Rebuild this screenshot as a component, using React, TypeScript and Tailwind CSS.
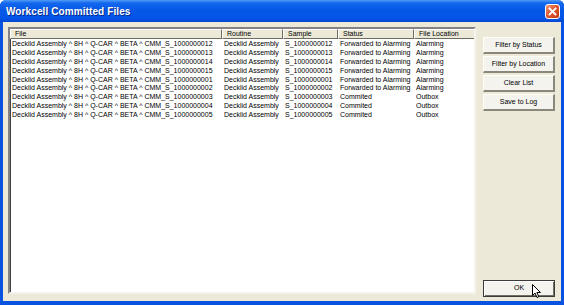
import React from "react";

const rows = [
  ["Decklid Assembly ^ 8H ^ Q-CAR ^ BETA ^ CMM_S_1000000012", "Decklid Assembly", "S_1000000012", "Forwarded to Alarming", "Alarming"],
  ["Decklid Assembly ^ 8H ^ Q-CAR ^ BETA ^ CMM_S_1000000013", "Decklid Assembly", "S_1000000013", "Forwarded to Alarming", "Alarming"],
  ["Decklid Assembly ^ 8H ^ Q-CAR ^ BETA ^ CMM_S_1000000014", "Decklid Assembly", "S_1000000014", "Forwarded to Alarming", "Alarming"],
  ["Decklid Assembly ^ 8H ^ Q-CAR ^ BETA ^ CMM_S_1000000015", "Decklid Assembly", "S_1000000015", "Forwarded to Alarming", "Alarming"],
  ["Decklid Assembly ^ 8H ^ Q-CAR ^ BETA ^ CMM_S_1000000001", "Decklid Assembly", "S_1000000001", "Forwarded to Alarming", "Alarming"],
  ["Decklid Assembly ^ 8H ^ Q-CAR ^ BETA ^ CMM_S_1000000002", "Decklid Assembly", "S_1000000002", "Forwarded to Alarming", "Alarming"],
  ["Decklid Assembly ^ 8H ^ Q-CAR ^ BETA ^ CMM_S_1000000003", "Decklid Assembly", "S_1000000003", "Commited", "Outbox"],
  ["Decklid Assembly ^ 8H ^ Q-CAR ^ BETA ^ CMM_S_1000000004", "Decklid Assembly", "S_1000000004", "Commited", "Outbox"],
  ["Decklid Assembly ^ 8H ^ Q-CAR ^ BETA ^ CMM_S_1000000005", "Decklid Assembly", "S_1000000005", "Commited", "Outbox"],
];

const cols = [
  { name: "File", w: "w-[212px]" },
  { name: "Routine", w: "w-[61px]" },
  { name: "Sample", w: "w-[55px]" },
  { name: "Status", w: "w-[76px]" },
  { name: "File Location", w: "w-[62px]" },
];

function Btn({ label, def }: { label: string; def?: boolean }) {
  return (
    <div
      className={
        "h-[17px] w-[72px] flex items-center justify-center bg-[#f4f3ee] text-[7px] text-black " +
        (def
          ? "border border-[#3b3b3b] shadow-[inset_1px_1px_0_#ffffff,inset_-1px_-1px_0_#716f64]"
          : "border-t border-l border-t-[#fffef5] border-l-[#fffef5] border-r-[2px] border-b-[2px] border-r-[#8a887c] border-b-[#8a887c]")
      }
    >
      {label}
    </div>
  );
}

export default function App() {
  return (
    <div
      className="w-[564px] h-[305px] flex flex-col bg-[#0a53e0] rounded-t-[6px] overflow-hidden"
      style={{ fontFamily: '"Liberation Sans", Arial, sans-serif' }}
    >
      <div className="h-[22px] shrink-0 flex items-center justify-between pl-[6px] pr-[4px] bg-[linear-gradient(to_bottom,#4f9cf7_0%,#1467ee_14%,#0558e6_45%,#0356e8_80%,#0247d4_100%)]">
        <span className="text-white font-bold text-[10px] tracking-[0.1px] [text-shadow:1px_1px_0_#0a2a8a]">
          Workcell Committed Files
        </span>
        <div className="w-[15px] h-[15px] rounded-[3px] border border-white bg-[linear-gradient(135deg,#f09a7a_0%,#e15a31_45%,#c23a13_100%)] flex items-center justify-center">
          <svg width="9" height="9" viewBox="0 0 9 9">
            <path d="M1.5 1.5 L7.5 7.5 M7.5 1.5 L1.5 7.5" stroke="white" strokeWidth="1.8" strokeLinecap="square" />
          </svg>
        </div>
      </div>
      <div className="flex-1 mx-[3px] mb-[4px] bg-[#ece9d8] flex pl-[5px] pt-[5px] pb-[7px] relative">
        <div className="w-[468px] h-[267px] bg-white border-2 border-t-[#848284] border-l-[#848284] border-r-[#f4f3ee] border-b-[#f4f3ee] shadow-[inset_1px_1px_0_#404040] text-black text-[7px] overflow-hidden">
          <div className="flex h-[10px]">
            {cols.map((c) => (
              <div
                key={c.name}
                className={
                  c.w +
                  " shrink-0 h-[10px] bg-[#ece9d8] border-t border-l border-t-white border-l-white border-r border-b border-r-[#6f6d62] border-b-[#6f6d62] pl-[4px] leading-[8px] whitespace-nowrap overflow-hidden"
                }
              >
                {c.name}
              </div>
            ))}
          </div>
          <div className="pt-[1px]">
            {rows.map((r, i) => (
              <div key={i} className="flex h-[8.9px]">
                {r.map((v, j) => (
                  <div
                    key={j}
                    className={cols[j].w + " shrink-0 pl-[2px] h-[8.9px] leading-[8.9px] whitespace-nowrap overflow-x-clip"}
                  >
                    {v}
                  </div>
                ))}
              </div>
            ))}
          </div>
        </div>
        <div className="ml-[7px] flex flex-col justify-between pt-[10px]">
          <div className="flex flex-col gap-[2px]">
            <Btn label="Filter by Status" />
            <Btn label="Filter by Location" />
            <Btn label="Clear List" />
            <Btn label="Save to Log" />
          </div>
          <div className="relative mb-[-3px]">
            <Btn label="OK" def />
            <svg className="absolute left-[49px] top-[4px]" width="10" height="15" viewBox="0 0 10 15">
              <path d="M0.5 0.5 L0.5 11.5 L3 9 L5 13.5 L6.8 12.7 L4.9 8.5 L8.5 8.5 Z" fill="white" stroke="black" strokeWidth="1" strokeLinejoin="miter" />
            </svg>
          </div>
        </div>
      </div>
    </div>
  );
}
